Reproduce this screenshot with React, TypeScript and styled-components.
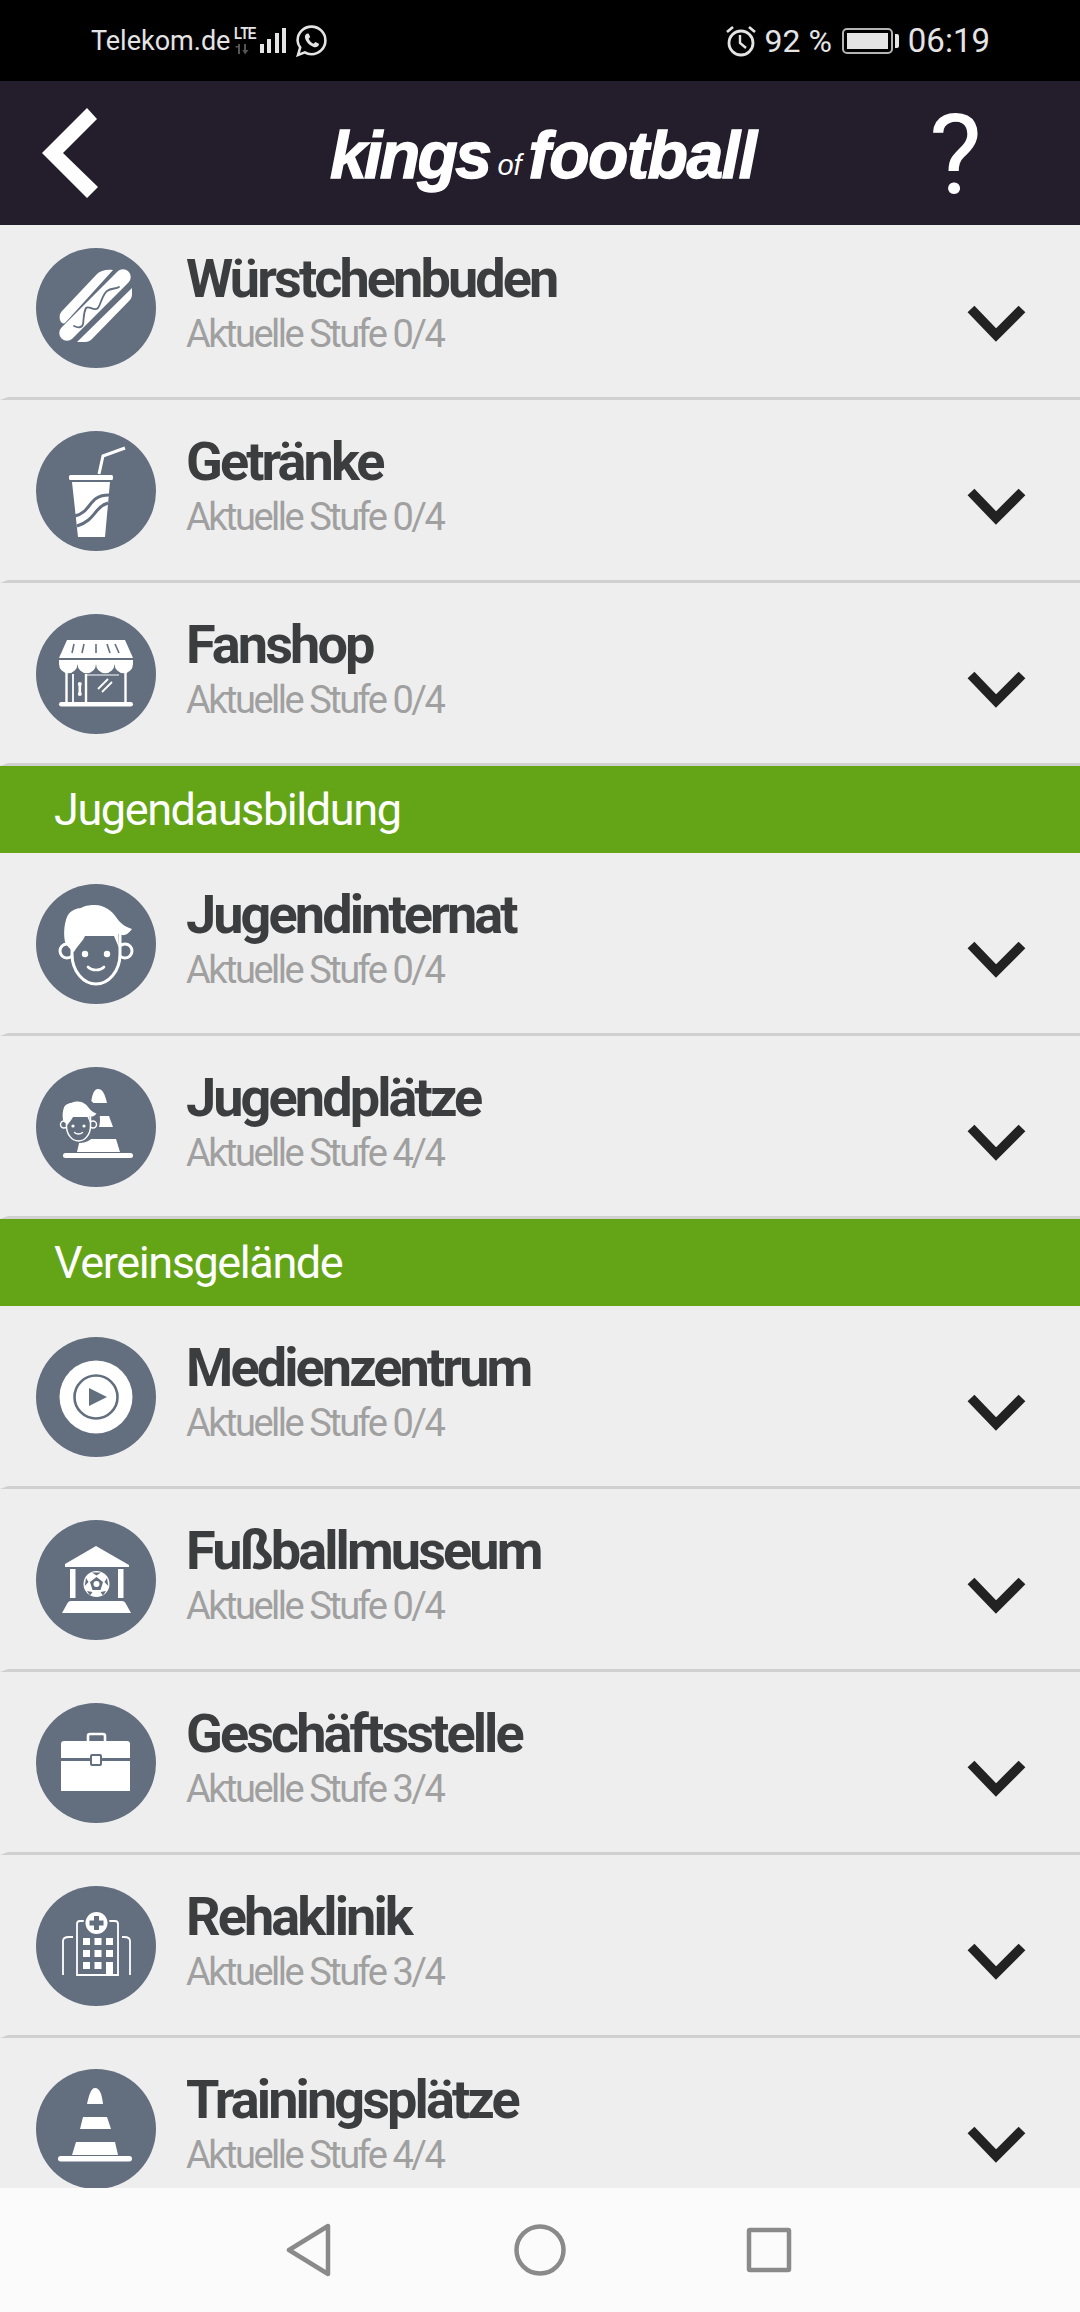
import { ReactNode } from "react";
import styled, { createGlobalStyle } from "styled-components";

const SLATE = "#636e7e";

const GlobalStyle = createGlobalStyle`
  html, body {
    margin: 0;
    padding: 0;
    background: #eeeeee;
  }
  * {
    box-sizing: border-box;
  }
`;

const IconSvg = ({ children }: { children: ReactNode }) => (
  <svg width="120" height="120" viewBox="0 0 120 120" fill="#fff">
    {children}
  </svg>
);

const HotdogIcon = () => (
  <IconSvg>
    <path d="M24 72 C23 67 24 65 27 62 L61 26 C64 23 70 21 77 22 L29 75 C27 76 25 75 24 72Z" />
    <line x1="31" y1="85" x2="87" y2="29" stroke="#fff" strokeWidth="15.5" strokeLinecap="round" />
    <path d="M41 94 L49 94 C52 94 54 93 56 91 L93 53 C95 51 96 49 96 46 L96 40Z" />
    <path
      d="M38 78 C42 80 46 80 47 76 C48 71 47 66 50 60 C53 57 58 64 62 60 C65 56 66 47 71 43 C75 40 80 41 83 39"
      fill="none"
      stroke={SLATE}
      strokeWidth="1.8"
      strokeLinecap="round"
    />
  </IconSvg>
);

const CupIcon = () => (
  <IconSvg>
    <polyline points="63,43 67,25 89,17" fill="none" stroke="#fff" strokeWidth="3" />
    <rect x="33" y="44" width="44" height="5" rx="1.5" />
    <path d="M36 51 H74 L69 106 H42Z" />
    <path d="M39 85 C56 81 52 64 73 64" fill="none" stroke={SLATE} strokeWidth="3" />
    <path d="M41 95 C60 89 58 76 72 72" fill="none" stroke={SLATE} strokeWidth="3" />
  </IconSvg>
);

const ShopIcon = () => (
  <IconSvg>
    <path d="M31 26 H89 L97 44 H23Z" />
    <g stroke={SLATE} strokeWidth="1.6">
      <line x1="38" y1="30" x2="36" y2="39" />
      <line x1="48" y1="30" x2="46" y2="39" />
      <line x1="60" y1="30" x2="60" y2="39" />
      <line x1="71" y1="30" x2="74" y2="39" />
      <line x1="79" y1="30" x2="83" y2="39" />
    </g>
    <path d="M23 46 H97 V50 A9.2 9.2 0 0 1 78.5 50 A9.2 9.2 0 0 1 60 50 A9.2 9.2 0 0 1 41.5 50 A9.2 9.2 0 0 1 23 50Z" />
    <g stroke="#fff" strokeWidth="2.4">
      <line x1="30.5" y1="56" x2="30.5" y2="90" />
      <line x1="89.5" y1="56" x2="89.5" y2="90" />
      <line x1="50" y1="60" x2="50" y2="90" />
      <line x1="37" y1="60" x2="37" y2="90" strokeWidth="1.8" />
      <line x1="50" y1="61" x2="83" y2="61" strokeWidth="1" />
    </g>
    <rect x="42.5" y="71" width="2.6" height="9" />
    <circle cx="43.8" cy="70" r="2" />
    <circle cx="43.8" cy="80" r="2" />
    <g stroke="#fff" strokeWidth="1.8">
      <line x1="62" y1="75" x2="72" y2="65" />
      <line x1="66" y1="78" x2="76" y2="68" />
    </g>
    <rect x="23" y="88" width="74" height="4.5" rx="2.2" />
  </IconSvg>
);

const FaceShape = () => (
  <>
    <circle cx="31" cy="67" r="7" fill="none" stroke="#fff" strokeWidth="3" />
    <circle cx="89" cy="67" r="7" fill="none" stroke="#fff" strokeWidth="3" />
    <path d="M36 48 H84 V70 C84 88 72 100 60 100 C48 100 36 88 36 70Z" fill={SLATE} stroke="#fff" strokeWidth="3" />
    <path d="M29 58 C27 47 29 38 31 33 C33 27 41 24 45 24 C50 21 55 21 59 21 C68 21 76 27 80 33 C83 38 89 43 96 45 C94 48 90 52 86 51 L82 50 L83 64 L78 52 H49 C47 57 42 61 38 68 C34 65 31 62 29 58Z" />
    <circle cx="49" cy="70" r="3.2" />
    <circle cx="71" cy="70" r="3.2" />
    <path d="M52 83 C56 87 64 87 68 83" fill="none" stroke="#fff" strokeWidth="2.6" strokeLinecap="round" />
  </>
);

const BoyIcon = () => (
  <IconSvg>
    <FaceShape />
  </IconSvg>
);

const BoyConeIcon = () => (
  <IconSvg>
    <path d="M55 36 C56 28 58 22 62 22 C67 22 69 28 71 36Z" />
    <path d="M62 49 H73 L77 60 H60Z" />
    <path d="M44 72 H80 L84 85 H41Z" />
    <rect x="27" y="86" width="70" height="5" rx="2.5" />
    <ellipse cx="44" cy="53" rx="20" ry="23" fill={SLATE} />
    <g transform="translate(12.5 24) scale(0.5)">
      <FaceShape />
    </g>
  </IconSvg>
);

const PlayIcon = () => (
  <IconSvg>
    <circle cx="60" cy="60" r="36.5" />
    <circle cx="60" cy="60" r="21.5" fill="none" stroke={SLATE} strokeWidth="2.6" />
    <path d="M53 51 L71 60 L53 69Z" fill={SLATE} />
  </IconSvg>
);

const MuseumIcon = () => (
  <IconSvg>
    <path d="M60 26 L93 45 V47 H29 V44Z" />
    <rect x="34" y="49" width="5.5" height="29" />
    <rect x="82" y="49" width="5.5" height="29" />
    <path d="M35 81 H86 C88 81 89 82 90 84 L95 93 H26 L31 84 C32 82 33 81 35 81Z" />
    <circle cx="60.5" cy="64" r="13" />
    <path d="M60.5 57 L67 62 L64.5 70 H56.5 L54 62Z" fill={SLATE} />
    <circle cx="60.5" cy="64" r="3" />
    <g fill={SLATE}>
      <path d="M56 52.5 H65 L60.5 55.5Z" />
      <path d="M71 58 L72.3 66 L68.5 62Z" />
      <path d="M50 58 L48.7 66 L52.5 62Z" />
      <path d="M67 75.5 L70 71 L64.5 72Z" />
      <path d="M54 75.5 L51 71 L56.5 72Z" />
    </g>
  </IconSvg>
);

const CaseIcon = () => (
  <IconSvg>
    <rect x="52" y="31" width="17" height="10" rx="2" fill="none" stroke="#fff" strokeWidth="2.6" />
    <path d="M28 38 H91 C93 38 94 39 94 41 V55 H25 V41 C25 39 26 38 28 38Z" />
    <rect x="25" y="58" width="69" height="30" />
    <rect x="55" y="52" width="10" height="10" rx="1" fill="#fff" stroke={SLATE} strokeWidth="2" />
  </IconSvg>
);

const ClinicIcon = () => (
  <IconSvg>
    <path d="M41 89 V38 C41 36 42 35 44 35 H79 C81 35 82 36 82 38 V89 H41Z" fill="none" stroke="#fff" strokeWidth="1.8" />
    <path d="M27 89 V55 C27 53 28 51 33 51 H37" fill="none" stroke="#fff" strokeWidth="1.8" />
    <path d="M94 89 V55 C94 53 93 51 88 51 H86" fill="none" stroke="#fff" strokeWidth="1.8" />
    <circle cx="60.5" cy="37" r="13" fill={SLATE} />
    <circle cx="60.5" cy="37" r="11" />
    <path d="M58 30 H63 V34.5 H67.5 V39.5 H63 V44 H58 V39.5 H53.5 V34.5 H58Z" fill={SLATE} />
    <rect x="47" y="52" width="7" height="7" />
    <rect x="58.5" y="52" width="7" height="7" />
    <rect x="70" y="52" width="7" height="7" />
    <rect x="47" y="64" width="7" height="7" />
    <rect x="58.5" y="64" width="7" height="7" />
    <rect x="70" y="64" width="7" height="7" />
    <rect x="47" y="76" width="7" height="7" />
    <rect x="58.5" y="76" width="7" height="7" />
    <rect x="70" y="76" width="7" height="13" />
  </IconSvg>
);

const ConeIcon = () => (
  <IconSvg>
    <path d="M51 35 C53 26 55 19 59 19 C64 19 66 26 67 35Z" />
    <path d="M47 48 H71 L75 60 H44Z" />
    <path d="M40 73 H79 L82 86 H36Z" />
    <rect x="22" y="87" width="74" height="5.5" rx="2.7" />
  </IconSvg>
);

type Building = { name: string; level: number; icon: ReactNode };
type Section = { title?: string; items: Building[] };

const sections: Section[] = [
  {
    items: [
      { name: "Würstchenbuden", level: 0, icon: <HotdogIcon /> },
      { name: "Getränke", level: 0, icon: <CupIcon /> },
      { name: "Fanshop", level: 0, icon: <ShopIcon /> },
    ],
  },
  {
    title: "Jugendausbildung",
    items: [
      { name: "Jugendinternat", level: 0, icon: <BoyIcon /> },
      { name: "Jugendplätze", level: 4, icon: <BoyConeIcon /> },
    ],
  },
  {
    title: "Vereinsgelände",
    items: [
      { name: "Medienzentrum", level: 0, icon: <PlayIcon /> },
      { name: "Fußballmuseum", level: 0, icon: <MuseumIcon /> },
      { name: "Geschäftsstelle", level: 3, icon: <CaseIcon /> },
      { name: "Rehaklinik", level: 3, icon: <ClinicIcon /> },
      { name: "Trainingsplätze", level: 4, icon: <ConeIcon /> },
    ],
  },
];

const App = () => {
  return (
    <Page>
      <GlobalStyle />
      <StatusBar>
        <StatusGroup>
          <StatusText>Telekom.de</StatusText>
          <NetworkBadge>
            <LteLabel>LTE</LteLabel>
            <svg width="18" height="12" viewBox="0 0 18 12" fill="#555">
              <rect x="3" y="1" width="2" height="10" />
              <rect x="0.5" y="3" width="2.5" height="1.5" />
              <path d="M9 1 H11 V7 H13.5 L10 11.5 L7.5 7 H9Z" />
            </svg>
          </NetworkBadge>
          <svg width="26" height="25" viewBox="0 0 26 25" fill="#e4e4e4">
            <rect x="0" y="16" width="4" height="9" />
            <rect x="7" y="11" width="4" height="14" />
            <rect x="15" y="5" width="4" height="20" />
            <rect x="22" y="0" width="4" height="25" />
          </svg>
          <WhatsappBadge>
            <svg width="31" height="32" viewBox="0 0 31 32" fill="none" stroke="#e4e4e4" strokeWidth="2.6">
              <path d="M2 30 L4.2 22.5 C2.6 20.2 1.6 18 1.6 15.4 C1.6 7.8 7.8 1.6 15.5 1.6 C23.2 1.6 29.4 7.8 29.4 15.4 C29.4 23 23.2 29.2 15.5 29.2 C13 29.2 10.8 28.6 8.8 27.4Z" />
              <path
                d="M10.5 8.8 C9 10 8.6 11.6 9.2 13.6 C10.4 17.4 13.8 20.8 17.6 22 C19.6 22.6 21.4 22.2 22.6 20.6 L23 18.8 L19.4 17 L17.6 18.8 C15.6 18 13.4 15.8 12.6 13.8 L14.2 12 L12.6 8.6Z"
                fill="#e4e4e4"
                stroke="none"
              />
            </svg>
          </WhatsappBadge>
        </StatusGroup>
        <StatusGroup>
          <svg width="32" height="32" viewBox="0 0 32 32" fill="none" stroke="#e4e4e4">
            <circle cx="16" cy="18" r="12" strokeWidth="2.8" />
            <path d="M15 10 V18 L21 23" strokeWidth="2.4" />
            <path d="M2 7 L8 2" strokeWidth="2.6" />
            <path d="M30 7 L24 2" strokeWidth="2.6" />
          </svg>
          <BatteryText>92 %</BatteryText>
          <Battery>
            <BatteryFill />
          </Battery>
          <BatteryNub />
          <ClockText>06:19</ClockText>
        </StatusGroup>
      </StatusBar>

      <Header>
        <svg width="58" height="90" viewBox="0 0 58 90">
          <path d="M46 0 L56 11 L22 45 L57 79 L46 90 L1 45Z" fill="#fff" />
        </svg>
        <Logo>
          <LogoWord $spacing={-2.6}>kings</LogoWord>
          <LogoOf>of</LogoOf>
          <LogoWord $spacing={-1.4}>football</LogoWord>
        </Logo>
        <HelpMark>?</HelpMark>
      </Header>

      <List>
        <ListInner>
          {sections.map((section, i) => (
            <div key={i}>
              {section.title && <SectionHead>{section.title}</SectionHead>}
              {section.items.map((item) => (
                <Row key={item.name}>
                  <IconCircle>{item.icon}</IconCircle>
                  <RowText>
                    <RowTitle>{item.name}</RowTitle>
                    <RowLevel>Aktuelle Stufe {item.level}/4</RowLevel>
                  </RowText>
                  <Chevron width="60" height="40" viewBox="0 0 60 40">
                    <polyline points="4,5 29,31 55,5" fill="none" stroke="#222" strokeWidth="9.5" />
                  </Chevron>
                </Row>
              ))}
            </div>
          ))}
        </ListInner>
      </List>

      <NavBar>
        <svg width="46" height="54" viewBox="0 0 46 54" fill="none" stroke="#8a8a8a" strokeWidth="4.5" strokeLinejoin="round">
          <path d="M42 3 V51 L3 27Z" />
        </svg>
        <svg width="52" height="52" viewBox="0 0 52 52" fill="none" stroke="#8a8a8a" strokeWidth="4.5">
          <circle cx="26" cy="26" r="23.5" />
        </svg>
        <svg width="46" height="46" viewBox="0 0 46 46" fill="none" stroke="#8a8a8a" strokeWidth="4.5" strokeLinejoin="round">
          <rect x="3" y="3" width="40" height="40" rx="1" />
        </svg>
      </NavBar>
    </Page>
  );
};

export default App;

const Page = styled.div`
  width: 1080px;
  height: 2312px;
  display: flex;
  flex-direction: column;
  overflow: hidden;
  background: #eeeeee;
  font-family: Roboto, "Liberation Sans", sans-serif;
`;

const StatusBar = styled.div`
  height: 81px;
  flex: none;
  background: #000;
  color: #e4e4e4;
  display: flex;
  justify-content: space-between;
  align-items: center;
  padding: 0 90px 0 91px;
`;

const StatusGroup = styled.div`
  display: flex;
  align-items: center;
`;

const StatusText = styled.span`
  font-size: 27px;
  line-height: 30px;
  margin-right: 4px;
`;

const NetworkBadge = styled.div`
  display: flex;
  flex-direction: column;
  align-items: center;
  width: 20px;
  height: 30px;
  margin-right: 6px;
`;

const LteLabel = styled.span`
  font-family: "Liberation Sans", sans-serif;
  font-size: 17px;
  font-weight: 700;
  line-height: 15px;
  letter-spacing: -1px;
  transform: scaleX(0.78);
  margin-bottom: 2px;
`;

const WhatsappBadge = styled.div`
  display: flex;
  margin-left: 10px;
`;

const BatteryText = styled.span`
  font-size: 32px;
  line-height: 34px;
  margin: 0 10px 0 7px;
`;

const ClockText = styled.span`
  font-size: 33px;
  line-height: 34px;
  margin-left: 9px;
`;

const Battery = styled.div`
  width: 51px;
  height: 26px;
  padding: 3px;
  border: 2px solid #b4b4b4;
  border-radius: 5px;
`;

const BatteryFill = styled.div`
  width: 100%;
  height: 100%;
  background: #e4e4e4;
`;

const BatteryNub = styled.div`
  width: 4px;
  height: 14px;
  margin-left: 2px;
  border-radius: 0 2px 2px 0;
  background: #e4e4e4;
`;

const Header = styled.header`
  height: 144px;
  flex: none;
  background: #241d2b;
  display: flex;
  align-items: center;
  padding: 0 98px 0 41px;
`;

const Logo = styled.div`
  display: flex;
  align-items: baseline;
  color: #fff;
  font-family: "Liberation Sans", sans-serif;
  font-style: italic;
  margin: 4px 0 0 231px;
`;

const LogoWord = styled.span<{ $spacing: number }>`
  font-size: 66px;
  font-weight: 700;
  line-height: 72px;
  letter-spacing: ${(props) => props.$spacing}px;
  -webkit-text-stroke: 1.4px #fff;
`;

const LogoOf = styled.span`
  font-size: 29px;
  line-height: 30px;
  margin: 0 7px 0 8px;
  position: relative;
  top: -3px;
`;

const HelpMark = styled.span`
  margin: 3px 0 0 auto;
  color: #fff;
  font-size: 112px;
  font-weight: 400;
  line-height: 110px;
`;

const List = styled.div`
  flex: 1;
  min-height: 0;
  overflow: hidden;
`;

// the list is scrolled a little, the first row is cut at the top
const ListInner = styled.div`
  margin-top: -8px;
`;

const SectionHead = styled.div`
  height: 87px;
  background: #64a518;
  color: #fff;
  font-size: 45px;
  font-weight: 400;
  line-height: 88px;
  letter-spacing: -1.4px;
  padding-left: 54px;
`;

const Row = styled.div`
  height: 183px;
  display: flex;
  align-items: center;
  padding: 1px 53px 0 28px;
  border-bottom: 3px solid #d0d0d0;
  border-left: 8px solid transparent;
  background-clip: padding-box;
`;

const IconCircle = styled.div`
  width: 120px;
  height: 120px;
  flex: none;
  border-radius: 50%;
  background: ${SLATE};
`;

const RowText = styled.div`
  flex: 1;
  margin-left: 30px;
  margin-top: -9px;
  display: flex;
  flex-direction: column;
`;

const RowTitle = styled.div`
  color: #3c3d3f;
  font-size: 54px;
  font-weight: 700;
  line-height: 56px;
  letter-spacing: -2.9px;
`;

const RowLevel = styled.div`
  color: #a0a0a0;
  font-size: 38px;
  font-weight: 400;
  line-height: 44px;
  letter-spacing: -2.5px;
  margin-top: 5px;
`;

const Chevron = styled.svg`
  flex: none;
  margin-top: 32px;
`;

const NavBar = styled.nav`
  height: 124px;
  flex: none;
  background: #fbfbfb;
  display: flex;
  align-items: center;
  padding-left: 286px;

  svg:nth-child(2) {
    margin-left: 182px;
  }
  svg:nth-child(3) {
    margin-left: 180px;
  }
`;
